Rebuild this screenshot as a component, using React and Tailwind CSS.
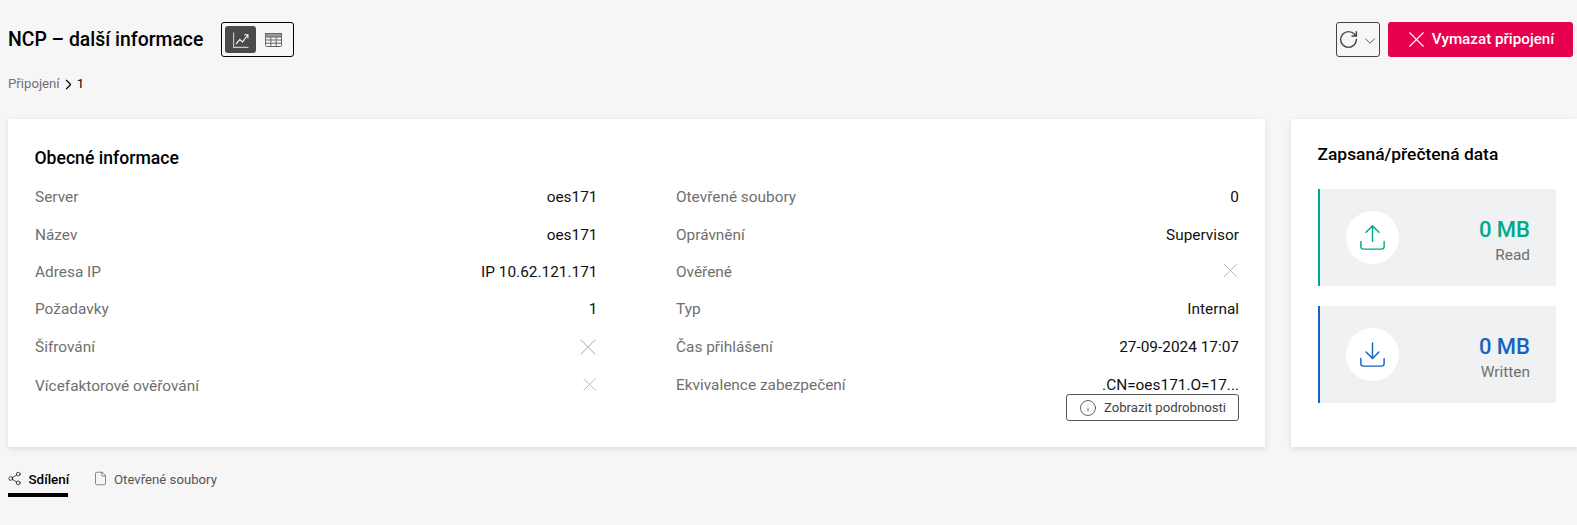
import { ChevronDown, ChevronRight, Download, File, Info, RotateCw, Share2, Upload, X } from 'lucide-react';

const leftRows = [
  { label: 'Server', value: 'oes171' },
  { label: 'Název', value: 'oes171' },
  { label: 'Adresa IP', value: 'IP 10.62.121.171' },
  { label: 'Požadavky', value: '1' },
  { label: 'Šifrování', cross: 28 },
];

const rightRows = [
  { label: 'Otevřené soubory', value: '0' },
  { label: 'Oprávnění', value: 'Supervisor' },
  { label: 'Ověřené', cross: 25, raised: true },
  { label: 'Typ', value: 'Internal' },
  { label: 'Čas přihlášení', value: '27-09-2024 17:07' },
];

function ChartIcon() {
  return (
    <svg width="16" height="16" viewBox="0 0 16 16" fill="none" stroke="currentColor" strokeWidth="1.1">
      <path d="M0.6 0.5V15.4H15.5" stroke="#c9c9c9" />
      <path d="M3 12.2L6.8 7.6L9.6 10L14.6 3" />
      <path d="M11.2 2.8H14.9V6.4" />
    </svg>
  );
}

function TableIcon() {
  return (
    <svg width="17" height="14" viewBox="0 0 17 14" fill="none" stroke="#666" strokeWidth="1">
      <rect x="0.5" y="0.5" width="16" height="13" rx="1" />
      <rect x="0.5" y="0.5" width="16" height="3.5" fill="#9a9a9a" />
      <path d="M0.5 7H16.5M0.5 10.2H16.5M5.8 4V13.5M11.2 4V13.5" />
    </svg>
  );
}

function InfoRow({ label, value, cross, raised }) {
  return (
    <div className="flex h-[37.4px] items-center justify-between">
      <span className="text-[#6f6f6f]">{label}</span>
      {cross ? (
        <X size={cross} strokeWidth={0.9} className={raised ? '-mr-[4px] -mt-[4px] text-[#b4b4b4]' : '-mr-[4px] text-[#b4b4b4]'} />
      ) : (
        <span className="text-[#111]">{value}</span>
      )}
    </div>
  );
}

function StatBox({ icon, value, label, border, color }) {
  return (
    <div className={`flex h-[97px] items-center justify-between border-l-2 bg-[#f0f1f3] px-[26px] ${border}`}>
      <div className={`flex h-[53px] w-[53px] items-center justify-center rounded-full bg-white ${color}`}>{icon}</div>
      <div className="pt-[7px] text-right">
        <div className={`text-[22px] leading-[26px] font-medium ${color}`}>{value}</div>
        <div className="mt-[1.5px] text-[15.4px] leading-[20px] text-[#6f6f6f]">{label}</div>
      </div>
    </div>
  );
}

export default function App() {
  return (
    <div className="h-[525px] overflow-hidden bg-[#f6f6f6] font-['Roboto',sans-serif] text-[15.4px] text-black">
      <div className="flex items-start justify-between pl-2 pr-1 pt-[22px]">
        <div>
          <div className="flex h-[35px] items-center">
            <h1 className="text-[19.4px] font-medium">NCP – další informace</h1>
            <div className="ml-[18px] flex h-[35px] w-[73px] items-center gap-[2px] rounded-[3px] border border-black px-[3px]">
              <span className="flex h-[27px] w-[31px] items-center justify-center rounded-[3px] bg-[#4a4a4a] text-white">
                <ChartIcon />
              </span>
              <span className="flex h-[27px] w-[31px] items-center justify-center">
                <TableIcon />
              </span>
            </div>
          </div>
          <div className="mt-[17px] flex items-center text-[13.2px] leading-[20px]">
            <span className="text-[#6f6f6f]">Připojení</span>
            <ChevronRight size={17} strokeWidth={1.6} />
            <span>1</span>
          </div>
        </div>
        <div className="flex items-center gap-[8px]">
          <button className="flex h-[35px] w-[44px] items-center justify-center gap-[2px] rounded-[3px] border border-[#444] text-[#444]">
            <RotateCw size={21} strokeWidth={1.6} />
            <ChevronDown size={18} strokeWidth={1.2} className="mt-[2px]" />
          </button>
          <button className="flex h-[35px] w-[185px] items-center justify-center rounded-[3px] bg-[#e6004d] pr-[4px] text-[15.2px] font-medium text-white">
            <X size={27} strokeWidth={1} className="mr-[2px]" />
            Vymazat připojení
          </button>
        </div>
      </div>

      <div className="mt-[25px] flex gap-[26px] pl-2">
        <section className="h-[328px] w-[1257px] shrink-0 bg-white pl-[27px] pr-[26px] pt-[28px] shadow-[0_2px_6px_rgba(0,0,0,0.1)]">
          <h2 className="-ml-[0.5px] text-[17.6px] leading-[22px] font-medium">Obecné informace</h2>
          <div className="mt-[10px] grid grid-cols-2 gap-x-[79px]">
            <div>
              {leftRows.map((row) => <InfoRow key={row.label} {...row} />)}
              <div className="flex h-[42px] items-center justify-between">
                <span className="text-[#6f6f6f]">Vícefaktorové ověřování</span>
                <X size={23} strokeWidth={0.9} className="-mr-[3px] -mt-[5px] text-[#b4b4b4]" />
              </div>
            </div>
            <div className="-ml-[0.5px]">
              {rightRows.map((row) => <InfoRow key={row.label} {...row} />)}
              <div className="flex items-center justify-between pt-[8px]">
                <span className="text-[#6f6f6f]">Ekvivalence zabezpečení</span>
                <span className="text-[#111]">.CN=oes171.O=17...</span>
              </div>
              <div className="-mt-[3px] flex justify-end">
                <button className="flex h-[27px] w-[173px] items-center justify-center gap-[7px] rounded-[3px] border border-[#555] text-[13.2px] text-[#444]">
                  <Info size={18} strokeWidth={1.1} />
                  Zobrazit podrobnosti
                </button>
              </div>
            </div>
          </div>
        </section>

        <section className="h-[328px] w-[286px] shrink-0 bg-white pl-[27px] pr-[21px] pt-[24px] shadow-[0_2px_6px_rgba(0,0,0,0.1)]">
          <h2 className="-ml-[0.5px] text-[17.4px] leading-[22px] font-medium">Zapsaná/přečtená data</h2>
          <div className="mt-[24px] flex flex-col gap-[20px]">
            <StatBox icon={<Upload size={31} strokeWidth={1.1} />} value="0 MB" label="Read" border="border-[#00a98a]" color="text-[#00a98a]" />
            <StatBox icon={<Download size={31} strokeWidth={1.1} />} value="0 MB" label="Written" border="border-[#1565c0]" color="text-[#1565c0]" />
          </div>
        </section>
      </div>

      <div className="mt-[23px] flex gap-[25px] pl-2 text-[13.2px]">
        <div className="flex h-[27px] w-[60px] items-start gap-[6.5px] border-b-4 border-black text-[13.4px] font-medium">
          <Share2 size={15} strokeWidth={1.1} className="-ml-[1px] mt-[1px] shrink-0" />
          Sdílení
        </div>
        <div className="flex h-[27px] items-start gap-[6px] text-[#555]">
          <File size={15} strokeWidth={1.1} className="mt-[1px]" />
          Otevřené soubory
        </div>
      </div>
    </div>
  );
}
